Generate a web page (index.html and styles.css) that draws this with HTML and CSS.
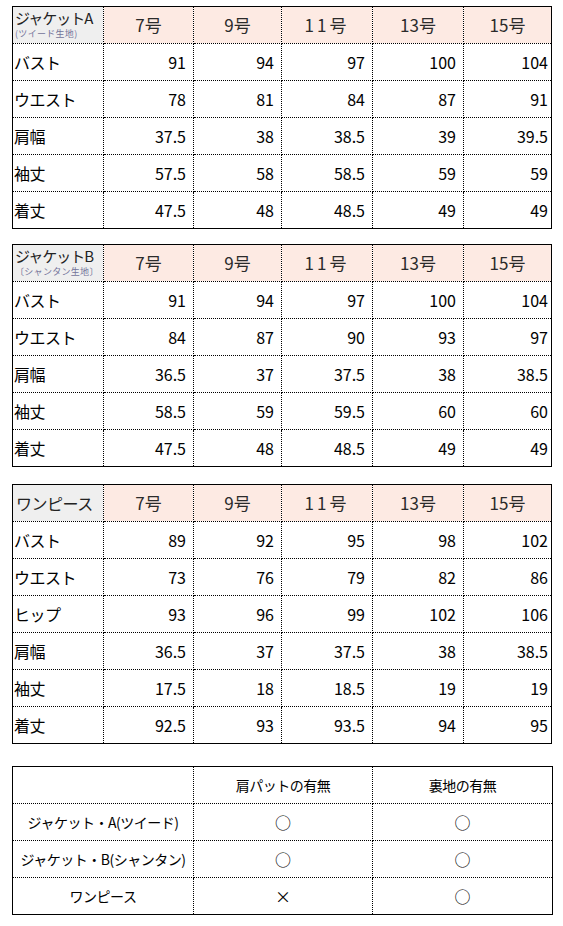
FILE: index.html
```html
<!DOCTYPE html>
<html lang="ja">
<head>
<meta charset="utf-8">
<link rel="stylesheet" href="styles.css">
</head>
<body>
<table class="size t1">
  <colgroup><col class="c1"><col class="c2"><col class="c3"><col class="c4"><col class="c5"><col class="c6"></colgroup>
  <tr class="head">
    <th class="name"><span class="main">ジャケットA</span><span class="sub">(ツイード生地)</span></th>
    <th>7号</th><th>9号</th><th class="wide">11号</th><th>13号</th><th>15号</th>
  </tr>
  <tr><td class="lbl">バスト</td><td>91</td><td>94</td><td>97</td><td>100</td><td>104</td></tr>
  <tr><td class="lbl">ウエスト</td><td>78</td><td>81</td><td>84</td><td>87</td><td>91</td></tr>
  <tr><td class="lbl">肩幅</td><td>37.5</td><td>38</td><td>38.5</td><td>39</td><td>39.5</td></tr>
  <tr><td class="lbl">袖丈</td><td>57.5</td><td>58</td><td>58.5</td><td>59</td><td>59</td></tr>
  <tr><td class="lbl">着丈</td><td>47.5</td><td>48</td><td>48.5</td><td>49</td><td>49</td></tr>
</table>

<table class="size t2">
  <colgroup><col class="c1"><col class="c2"><col class="c3"><col class="c4"><col class="c5"><col class="c6"></colgroup>
  <tr class="head">
    <th class="name"><span class="main">ジャケットB</span><span class="sub">〔シャンタン生地〕</span></th>
    <th>7号</th><th>9号</th><th class="wide">11号</th><th>13号</th><th>15号</th>
  </tr>
  <tr><td class="lbl">バスト</td><td>91</td><td>94</td><td>97</td><td>100</td><td>104</td></tr>
  <tr><td class="lbl">ウエスト</td><td>84</td><td>87</td><td>90</td><td>93</td><td>97</td></tr>
  <tr><td class="lbl">肩幅</td><td>36.5</td><td>37</td><td>37.5</td><td>38</td><td>38.5</td></tr>
  <tr><td class="lbl">袖丈</td><td>58.5</td><td>59</td><td>59.5</td><td>60</td><td>60</td></tr>
  <tr><td class="lbl">着丈</td><td>47.5</td><td>48</td><td>48.5</td><td>49</td><td>49</td></tr>
</table>

<table class="size t3">
  <colgroup><col class="c1"><col class="c2"><col class="c3"><col class="c4"><col class="c5"><col class="c6"></colgroup>
  <tr class="head">
    <th class="name single"><span class="main">ワンピース</span></th>
    <th>7号</th><th>9号</th><th class="wide">11号</th><th>13号</th><th>15号</th>
  </tr>
  <tr><td class="lbl">バスト</td><td>89</td><td>92</td><td>95</td><td>98</td><td>102</td></tr>
  <tr><td class="lbl">ウエスト</td><td>73</td><td>76</td><td>79</td><td>82</td><td>86</td></tr>
  <tr><td class="lbl">ヒップ</td><td>93</td><td>96</td><td>99</td><td>102</td><td>106</td></tr>
  <tr><td class="lbl">肩幅</td><td>36.5</td><td>37</td><td>37.5</td><td>38</td><td>38.5</td></tr>
  <tr><td class="lbl">袖丈</td><td>17.5</td><td>18</td><td>18.5</td><td>19</td><td>19</td></tr>
  <tr><td class="lbl">着丈</td><td>92.5</td><td>93</td><td>93.5</td><td>94</td><td>95</td></tr>
</table>

<table class="spec">
  <colgroup><col class="s1"><col class="s2"><col class="s3"></colgroup>
  <tr><td></td><td>肩パットの有無</td><td>裏地の有無</td></tr>
  <tr><td>ジャケット・A(ツイード)</td><td class="mark">○</td><td class="mark">○</td></tr>
  <tr><td>ジャケット・B(シャンタン)</td><td class="mark">○</td><td class="mark">○</td></tr>
  <tr><td>ワンピース</td><td class="mark">×</td><td class="mark">○</td></tr>
</table>
</body>
</html>
```

FILE: styles.css
```css
html, body {
  margin: 0;
  padding: 0;
  background: #ffffff;
}
body {
  padding: 6px 0 0 12px;
  font-family: "Noto Sans CJK JP", "Noto Sans", sans-serif;
  color: #000;
}
table {
  border-collapse: collapse;
  table-layout: fixed;
  width: 540px;
  border: 1px solid #000;
}
.t2 { margin-top: 15px; }
.t3 { margin-top: 17px; }
.spec { margin-top: 22px; }

.c1 { width: 91px; }
.c2 { width: 90px; }
.c3 { width: 88px; }
.c4 { width: 91px; }
.c5 { width: 91px; }
.c6 { width: 88px; }

.size tr { height: 37px; }
.size td, .size th {
  border: 1px dotted #000;
  padding: 0 7px 0 0;
  font-size: 16px;
  font-weight: 400;
  line-height: 18px;
  text-align: right;
  white-space: nowrap;
  overflow: hidden;
}
.size td:last-child, .size th:last-child { padding-right: 3px; }
.size td.lbl {
  text-align: left;
  padding: 0 0 0 1px;
  letter-spacing: -0.5px;
}
.size tr:first-child td, .size tr:first-child th { border-top: 1px solid #000; }
.size tr:last-child td { border-bottom: 1px solid #000; }
.size td:first-child, .size th:first-child { border-left: 1px solid #000; }
.size td:last-child, .size th:last-child { border-right: 1px solid #000; }

.head th {
  background: #fdeae3;
  color: #2b2b2b;
  text-align: center;
  padding: 0;
  font-size: 17px;
}
.head th:last-child { padding: 0; }
.head th.wide { letter-spacing: 3px; }
.head th.name {
  background: #efefef;
  text-align: left;
  padding: 1px 0 0 2px;
  vertical-align: top;
}
.head th.name .main {
  display: block;
  font-size: 15px;
  line-height: 19px;
  letter-spacing: -1px;
  color: #222;
}
.head th.name .sub {
  display: block;
  margin-top: 2px;
  font-size: 9px;
  line-height: 10px;
  color: #73739a;
  letter-spacing: 0.3px;
}
.head th.name.single {
  vertical-align: middle;
  padding: 0 0 0 3px;
}
.head th.name.single .main {
  font-size: 16px;
  letter-spacing: -0.5px;
}

.s1 { width: 181px; }
.s2 { width: 179px; }
.s3 { width: 180px; }
.spec tr { height: 37px; }
.spec td {
  border: 1px dotted #000;
  font-size: 14px;
  line-height: 18px;
  text-align: center;
  padding: 0;
  white-space: nowrap;
  letter-spacing: -0.5px;
}
.spec td.mark {
  font-size: 16px;
  color: #000;
  letter-spacing: 0;
}
.spec tr:first-child td { border-top: 1px solid #000; }
.spec tr:last-child td { border-bottom: 1px solid #000; }
.spec td:first-child { border-left: 1px solid #000; }
.spec td:last-child { border-right: 1px solid #000; }
```
